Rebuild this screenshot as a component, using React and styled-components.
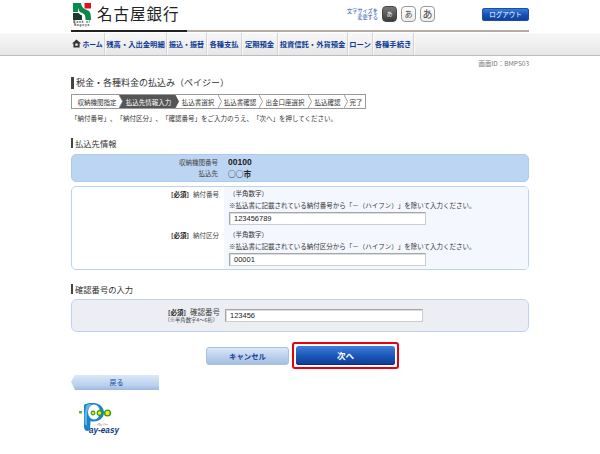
import React from "react";
import styled, { createGlobalStyle } from "styled-components";

const Global = createGlobalStyle`
  html, body { margin: 0; padding: 0; background: #fff; }
  body { font-family: "Noto Sans CJK JP", "Liberation Sans", sans-serif; color: #333; font-size: 7px; text-spacing-trim: space-all; }
`;
const Page = styled.div`width: 600px; height: 454px; overflow: hidden;`;
const Wrap = styled.div`width: 458px; margin-left: 71px;`;
const Header = styled.header`height: 30px; display: flex; align-items: flex-start;`;
const Rule = styled.div`
  width: 458px; height: 2px; margin-left: 71px;
  background: linear-gradient(to right, #222 0, #222 116px, #b5aba5 116px, #b5aba5 100%);
`;
const LogoBox = styled.div`width: 20px; margin: 3px 0 0 1px; display: flex; flex-direction: column; align-items: center;`;
const LogoSmall = styled.div`font: 700 3px/3.4px "Liberation Sans", sans-serif; letter-spacing: 0.9px; color: #333; text-align: center; width: 20px; margin-top: 1px;`;
const BankName = styled.div`
  font: 400 15.5px/18px "Noto Sans CJK JP", sans-serif; color: #222; margin: 4px 0 0 5px; letter-spacing: 1px;
`;
const SizeArea = styled.div`display: flex; align-items: center; margin: 6px 0 0 auto; gap: 4px;`;
const SizeLabel = styled.div`font-size: 5.2px; line-height: 6px; color: #1b4fa8; text-align: right; margin-right: 0;`;
const SizeBtn = styled.div`
  width: 15px; height: 16px; box-sizing: border-box; border-radius: 4px; display: flex; align-items: center; justify-content: center;
  border: 1px solid ${p => (p.$on ? "#444" : "#999")};
  background: ${p => (p.$on ? "linear-gradient(#777,#3c3c3c)" : "linear-gradient(#fff,#ececec)")};
  color: ${p => (p.$on ? "#eee" : "#444")}; font-size: ${p => p.$fs}px; line-height: 1;
`;
const Logout = styled.div`
  width: 47px; height: 13px; margin-left: 43px; border-radius: 3px;
  background: linear-gradient(#3f83e0, #1450b4 55%, #0c3f98); color: #fff; font-size: 6.5px; line-height: 12px; text-align: center;
  box-shadow: inset 0 0 0 1px #1a4da3;
`;
const NavBar = styled.nav`
  height: 23px; box-sizing: border-box; margin-top: 1px; border-bottom: 1px solid #bdbdbd;
  background: linear-gradient(#f8f8f8, #e6e6e6);
`;
const NavInner = styled.ul`display: flex; margin: 0 0 0 71px; padding: 0; list-style: none; height: 100%;`;
const NavItem = styled.li`
  display: flex; align-items: center; gap: 1px; height: 100%; padding: 0 0 1px; box-sizing: border-box;
  width: ${p => p.$w}px; justify-content: center; white-space: nowrap;
  border-right: 1px solid #d4d4d4; box-shadow: 1px 0 0 #fafafa;
  color: #0a3a96; font-size: ${p => p.$fs || 7.3}px; font-weight: 700;
  svg { flex-shrink: 0; }
`;
const PageId = styled.div`text-align: right; font-size: 6.5px; line-height: 10px; color: #777; margin-top: 2px; height: 12px;`;
const Title = styled.h1`
  margin: 7px 0 0; font-size: 9px; line-height: 12px; font-weight: 400; color: #333;
  border-left: 3px solid #444; padding-left: 2px; height: 12px;
`;
const Steps = styled.ol`
  display: flex; width: fit-content; list-style: none; margin: 5px 0 0; padding: 0; height: 15px;
  border: 1px solid #999; box-sizing: border-box; background: #fff;
`;
const Step = styled.li`
  position: relative; display: flex; align-items: center; justify-content: center; white-space: nowrap; box-sizing: border-box;
  width: ${p => p.$w}px; padding: 0 2px 0 5px; font-size: 6.5px; color: ${p => (p.$on ? "#fff" : "#333")};
  background: ${p => (p.$on ? "#555" : "transparent")};
  svg { position: absolute; left: 100%; top: 0; z-index: 1; }
`;
const Lead = styled.p`margin: 3px 0 0; font-size: 6.5px; line-height: 12px; color: #333;`;
const Heading = styled.h2`
  margin: ${p => p.$mt}px 0 0; font-size: 8.3px; line-height: 10px; font-weight: 400; color: #333;
  border-left: 2px solid #444; padding-left: 2px; height: 10px;
`;
const InfoBox = styled.div`
  margin-top: 6px; height: 28px; box-sizing: border-box; border: 1px solid #aecbee; border-radius: 5px;
  background: #bcd5f3; padding-top: 2px;
`;
const InfoRow = styled.div`display: grid; grid-template-columns: 146px 1fr; column-gap: 10px; line-height: 11px; font-size: 6.5px;`;
const InfoLabel = styled.div`text-align: right; color: #444;`;
const InfoVal = styled.div`font-weight: 700; color: #222; font-size: ${p => p.$fs}px; font-family: ${p => p.$latin ? '"Liberation Sans", sans-serif' : "inherit"};`;
const FormBox = styled.div`
  margin-top: 4px; height: 84px; box-sizing: border-box; border: 1px solid #bcd3f0; border-radius: 5px; overflow: hidden;
`;
const FormRow = styled.div`
  display: grid; grid-template-columns: 152px 1fr; height: 41px;
`;
const FormLabel = styled.div`
  text-align: right; padding: 1px 5px 0 0; font-size: 6.5px; line-height: 12px; color: #444;
  b { color: #222; margin-right: 4px; }
`;
const FormField = styled.div`background: #f4f7fe; padding-left: 5px; font-size: 6.5px; line-height: 12px; color: #333; & > span { white-space: nowrap; }`;
const Input = styled.div`
  width: ${p => p.$w}px; height: 13px; box-sizing: border-box; border: 1px solid #a6a6a6; border-right-color: #ccc; border-bottom-color: #ccc;
  box-shadow: inset 1px 1px 0 #ddd; background: #fff; margin-top: ${p => p.$mt}px; padding-left: 4px;
  font: 7.5px/11px "Liberation Sans", sans-serif; color: #222;
`;
const ConfirmBox = styled.div`
  margin-top: 5px; height: 33px; box-sizing: border-box; border: 1px solid #bcd3f0; border-radius: 6px; background: #eceef4;
  display: flex; align-items: center;
`;
const ConfirmLabel = styled.div`
  width: 153px; text-align: right; padding-right: 5px; box-sizing: border-box; font-size: 7.5px; line-height: 9px; color: #444;
  b { color: #222; margin-right: 4px; font-size: 6.5px; }
  small { display: block; font-size: 5.3px; line-height: 7px; padding-right: 2px; }
`;
const Buttons = styled.div`display: flex; align-items: center; gap: 3px; margin-top: 10px; padding-left: 135px;`;
const Cancel = styled.div`
  width: 83px; height: 18px; border-radius: 3px; border: 1px solid #a9c1de; box-sizing: border-box;
  background: linear-gradient(#dbe8f9, #b6cdea 60%, #a7c0e0); color: #17409a; font-size: 7.4px; font-weight: 700; line-height: 16px; text-align: center;
`;
const Red = styled.div`border: 2px solid #e8000f; border-radius: 3px; padding: 2px;`;
const Next = styled.div`
  width: 99px; height: 19px; border-radius: 3px; background: linear-gradient(#3f7fdb, #1a55b5 55%, #0d3c94);
  color: #fff; font-size: 8.5px; font-weight: 700; line-height: 18px; text-align: center; box-shadow: inset 0 -1px 0 #0a2c70;
`;
const Back = styled.div`
  width: 88px; height: 15px; margin-top: 6px; box-sizing: border-box; padding-left: 3px; background: linear-gradient(#dbe8f9, #b9d0ee 70%, #9db8dc);
  clip-path: polygon(4px 0, 100% 0, 100% 100%, 4px 100%, 0 45%);
  color: #1b4aa5; font-size: 7px; line-height: 15px; text-align: center;
`;
const PayLogo = styled.div`margin: 13px 0 0 8px; width: 42px; height: 32px;`;

const Chev = ({ on }) => (
  <svg width="4" height="13" viewBox="0 0 4 13">
    <path d="M0 0 L3.6 6.5 L0 13" fill={on ? "#555" : "#fff"} stroke={on ? "#444" : "#888"} strokeWidth="0.8" />
  </svg>
);
const BankMark = () => (
  <svg width="18" height="17" viewBox="0 0 18 17">
    <path d="M0 0 H8 C8.5 4 11 6 14 7 C17 8 18 10 18 17 H12.5 C12.5 13 12 11 9 10 C6.5 9 5.5 7.5 5.5 5.5 H5 V9 H0 Z" fill="#0a8a4a" />
    <rect x="11.5" y="0" width="6.5" height="5.5" fill="#e2101e" />
    <path d="M0 10 H5.5 C7 11.5 8 12 9 12.5 V17 H0 Z" fill="#1c3a2c" />
  </svg>
);
const Home = () => (
  <svg width="9" height="9" viewBox="0 0 9 9"><path d="M4.5 .5 L9 4.5 H7.6 V8.5 H1.4 V4.5 H0 Z M3.3 4.5 V6.8 H5.7 V4.5 Z" fill="#333" fillRule="evenodd" /></svg>
);
const PayEasy = () => (
  <svg width="42" height="32" viewBox="0 0 42 32">
    <path d="M5 2 C10 -1.5 24 -1.5 25 9 C25.5 17 16 20 11.5 18 L11 27 C9 29 5 28 5 24 Z" fill="#1a84c8" />
    <path d="M7 3 C8 1 12 1 13 2 C9 3 7.5 8 8 22 C6 24 5.5 20 5.5 12 Z" fill="#63b5e6" />
    <ellipse cx="15" cy="9" rx="6" ry="7.5" fill="#fff" />
    <rect x="0" y="8" width="3" height="2.5" fill="#5cb531" />
    <circle cx="14" cy="10" r="1.9" fill="#ffe600" stroke="#2a9a2a" strokeWidth="1.1" />
    <circle cx="20.5" cy="10" r="2.3" fill="#ffe600" stroke="#2a9a2a" strokeWidth="1.2" />
    <circle cx="28.5" cy="10" r="2.9" fill="#ffe600" stroke="#2a9a2a" strokeWidth="1.4" />
    <text x="18" y="22.5" fontFamily="Noto Sans CJK JP, sans-serif" fontSize="3.2" fill="#222" textLength="11">ペイジー</text>
    <text x="10" y="30" fontFamily="Liberation Sans, sans-serif" fontWeight="700" fontStyle="italic" fontSize="9" fill="#0e3a80" textLength="30" lengthAdjust="spacingAndGlyphs">ay-easy</text>
  </svg>
);

const nav = [["ホーム", 34, 6.8], ["残高・入出金明細", 62], ["振込・振替", 40, 7], ["各種支払", 35], ["定期預金", 36], ["投資信託・外貨預金", 70], ["ローン", 25], ["各種手続き", 41]];
const steps = [["収納機関指定", 47, false], ["払込先情報入力", 56, true], ["払込書選択", 43, false], ["払込書確認", 41, false], ["出金口座選択", 49, false], ["払込確認", 36, false], ["完了", 21, false]];

export default function App() {
  return (
    <Page>
      <Global />
      <Wrap>
        <Header>
          <LogoBox>
            <BankMark />
            <LogoSmall>Bank of<br />Nagoya</LogoSmall>
          </LogoBox>
          <BankName>名古屋銀行</BankName>
          <SizeArea>
            <SizeLabel>文字サイズを<br />変更する</SizeLabel>
            <SizeBtn $on $fs={6}>あ</SizeBtn>
            <SizeBtn $fs={8}>あ</SizeBtn>
            <SizeBtn $fs={10}>あ</SizeBtn>
            <Logout>ログアウト</Logout>
          </SizeArea>
        </Header>
      </Wrap>
      <Rule />
      <NavBar>
        <NavInner>
          {nav.map(([t, w, fs], i) => (
            <NavItem key={t} $w={w} $fs={fs}>{i === 0 && <Home />}{t}</NavItem>
          ))}
        </NavInner>
      </NavBar>
      <Wrap>
        <PageId>画面ID：BMPS03</PageId>
        <Title>税金・各種料金の払込み（ペイジー）</Title>
        <Steps>
          {steps.map(([t, w, on], i) => (
            <Step key={t} $w={w} $on={on}>
              {t}
              {i < steps.length - 1 && <Chev on={on} />}
            </Step>
          ))}
        </Steps>
        <Lead>「納付番号」、「納付区分」、「確認番号」をご入力のうえ、「次へ」を押してください。</Lead>
        <Heading $mt={14}>払込先情報</Heading>
        <InfoBox>
          <InfoRow><InfoLabel>収納機関番号</InfoLabel><InfoVal $latin $fs={8.5}>00100</InfoVal></InfoRow>
          <InfoRow><InfoLabel>払込先</InfoLabel><InfoVal $fs={7.7}>○○市</InfoVal></InfoRow>
        </InfoBox>
        <FormBox>
          <FormRow>
            <FormLabel><b>[必須]</b>納付番号</FormLabel>
            <FormField>
              <span>（半角数字）</span><br /><span>※払込書に記載されている納付番号から「－（ハイフン）」を除いて入力ください。</span>
              <Input $w={197} $mt={1}>123456789</Input>
            </FormField>
          </FormRow>
          <FormRow>
            <FormLabel><b>[必須]</b>納付区分</FormLabel>
            <FormField>
              <span>（半角数字）</span><br /><span>※払込書に記載されている納付区分から「－（ハイフン）」を除いて入力ください。</span>
              <Input $w={197} $mt={1}>00001</Input>
            </FormField>
          </FormRow>
        </FormBox>
        <Heading $mt={14}>確認番号の入力</Heading>
        <ConfirmBox>
          <ConfirmLabel><b>[必須]</b>確認番号<small>（※半角数字4～6桁）</small></ConfirmLabel>
          <Input $w={198} $mt={0}>123456</Input>
        </ConfirmBox>
        <Buttons>
          <Cancel>キャンセル</Cancel>
          <Red><Next>次へ</Next></Red>
        </Buttons>
        <Back>戻る</Back>
        <PayLogo><PayEasy /></PayLogo>
      </Wrap>
    </Page>
  );
}
